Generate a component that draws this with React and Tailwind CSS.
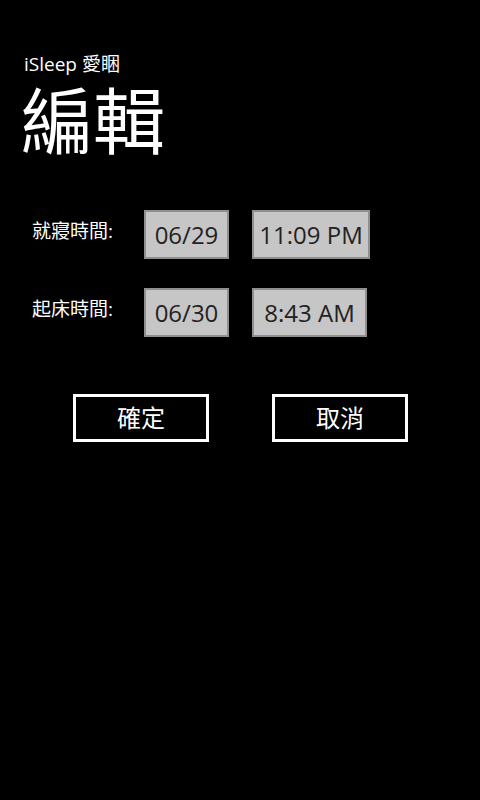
import React from "react";

const FONT = { fontFamily: '"Open Sans", "Noto Sans CJK TC", sans-serif' };

function Field({ label, date, time, timeWidth }) {
  return (
    <div className="flex items-center h-[49px]">
      <div className="w-[120px] pl-[8px] text-[19px] leading-[24px] text-white -mt-[8px]">{label}</div>
      <div className="h-[49px] w-[85px] flex items-center justify-center bg-[#c6c6c6] border-2 border-[#8f8f8f] text-[24px] text-[#222]">
        {date}
      </div>
      <div className={`ml-[23px] h-[49px] ${timeWidth} flex items-center justify-center bg-[#c6c6c6] border-2 border-[#8f8f8f] text-[24px] text-[#222]`}>
        {time}
      </div>
    </div>
  );
}

export default function App() {
  return (
    <div className="w-[480px] h-[800px] bg-black text-white pl-[24px] pt-[52px]" style={FONT}>
      <div className="text-[19px] leading-[24px]">iSleep 愛睏</div>
      <div className="text-[72px] leading-[72px] -ml-[3px] mt-[8px]">編輯</div>

      <div className="mt-[54px] flex flex-col gap-[29px]">
        <Field label="就寢時間:" date="06/29" time="11:09 PM" timeWidth="w-[118px]" />
        <Field label="起床時間:" date="06/30" time="8:43 AM" timeWidth="w-[115px]" />
      </div>

      <div className="mt-[57px] ml-[49px] flex gap-[63px]">
        <button className="w-[136px] h-[48px] border-[3px] border-white text-[24px] text-white">確定</button>
        <button className="w-[136px] h-[48px] border-[3px] border-white text-[24px] text-white">取消</button>
      </div>
    </div>
  );
}
